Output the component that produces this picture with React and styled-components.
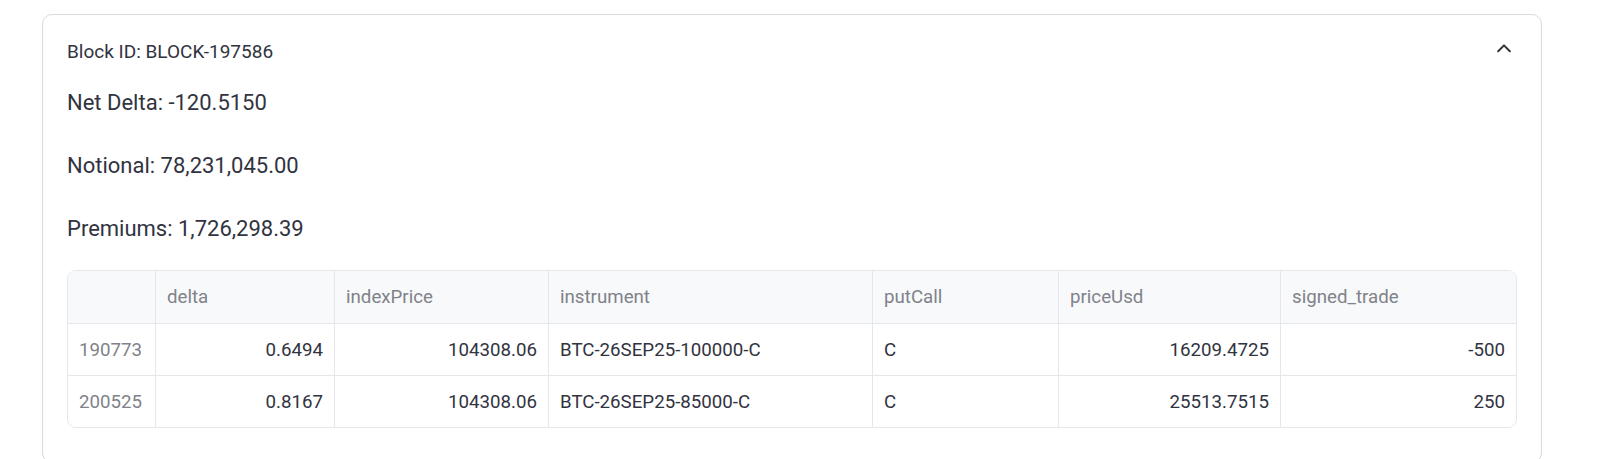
import styled, { createGlobalStyle } from "styled-components";

const GlobalStyle = createGlobalStyle`
  html, body {
    margin: 0;
    padding: 0;
    background: #ffffff;
    overflow: hidden;
  }
  * {
    box-sizing: border-box;
  }
`;

const trades = [
  {
    id: "190773",
    delta: "0.6494",
    indexPrice: "104308.06",
    instrument: "BTC-26SEP25-100000-C",
    putCall: "C",
    priceUsd: "16209.4725",
    signed: "-500",
  },
  {
    id: "200525",
    delta: "0.8167",
    indexPrice: "104308.06",
    instrument: "BTC-26SEP25-85000-C",
    putCall: "C",
    priceUsd: "25513.7515",
    signed: "250",
  },
];

const columns = [
  { key: "id", label: "", align: "left", index: true },
  { key: "delta", label: "delta", align: "right" },
  { key: "indexPrice", label: "indexPrice", align: "right" },
  { key: "instrument", label: "instrument", align: "left" },
  { key: "putCall", label: "putCall", align: "left" },
  { key: "priceUsd", label: "priceUsd", align: "right" },
  { key: "signed", label: "signed_trade", align: "right" },
];

const App = () => {
  return (
    <Page>
      <GlobalStyle />
      <Expander>
        <Summary>
          <Label>Block ID: BLOCK-197586</Label>
          <Chevron width="14" height="10" viewBox="0 0 14 10">
            <path d="M1.2 8.2 L7 2.4 L12.8 8.2" />
          </Chevron>
        </Summary>
        <Content>
          <Stats>
            <Stat>Net Delta: -120.5150</Stat>
            <Stat>Notional: 78,231,045.00</Stat>
            <Stat>Premiums: 1,726,298.39</Stat>
          </Stats>
          <Frame>
            <Row header>
              {columns.map((c) => (
                <HeadCell key={c.key}>{c.label}</HeadCell>
              ))}
            </Row>
            {trades.map((t, i) => (
              <Row key={t.id} last={i === trades.length - 1}>
                {columns.map((c) => (
                  <Cell key={c.key} align={c.align} index={c.index}>
                    {t[c.key]}
                  </Cell>
                ))}
              </Row>
            ))}
          </Frame>
        </Content>
      </Expander>
    </Page>
  );
};
export default App;

const Page = styled.div`
  padding: 14px 0 0 42px;
  font-family: "Roboto", "Liberation Sans", sans-serif;
  color: #31333f;
`;
const Expander = styled.div`
  width: 1500px;
  height: 449px;
  border: 1px solid #d9dadd;
  border-radius: 10px;
  background: #ffffff;
`;
const Summary = styled.div`
  display: flex;
  justify-content: space-between;
  align-items: flex-start;
  padding: 24px 30px 0 24px;
`;
const Label = styled.span`
  font-size: 19px;
  line-height: 26px;
`;
const Chevron = styled.svg`
  margin-top: 3.5px;
  fill: none;
  stroke: #31333f;
  stroke-width: 2;
  stroke-linecap: round;
  stroke-linejoin: round;
`;
const Content = styled.div`
  padding: 0 24px 0 24px;
`;
const Stats = styled.div`
  display: flex;
  flex-direction: column;
  gap: 33px;
  padding: 23px 0 26px 0;
`;
const Stat = styled.p`
  margin: 0;
  font-size: 22px;
  line-height: 30px;
`;
const Frame = styled.div`
  width: 1450px;
  border: 1px solid #e6e7eb;
  border-radius: 9px;
  overflow: hidden;
`;
const Row = styled.div`
  display: grid;
  grid-template-columns: 88px 179px 214px 324px 186px 222px 1fr;
  height: ${(props) => (props.header ? "53px" : props.last ? "51px" : "52px")};
  background: ${(props) => (props.header ? "#f8f9fb" : "#ffffff")};
  border-bottom: ${(props) => (props.last ? "none" : "1px solid #e6e7eb")};
  font-size: 18.7px;
`;
const HeadCell = styled.div`
  display: flex;
  align-items: center;
  padding: 0 11px;
  color: #808289;
  border-right: 1px solid #e6e7eb;
  &:last-child {
    border-right: none;
  }
`;
const Cell = styled.div`
  display: flex;
  align-items: center;
  justify-content: ${(props) =>
    props.align === "right" ? "flex-end" : "flex-start"};
  padding: 0 11px;
  color: ${(props) => (props.index ? "#808289" : "#31333f")};
  border-right: 1px solid #e6e7eb;
  &:last-child {
    border-right: none;
  }
`;
